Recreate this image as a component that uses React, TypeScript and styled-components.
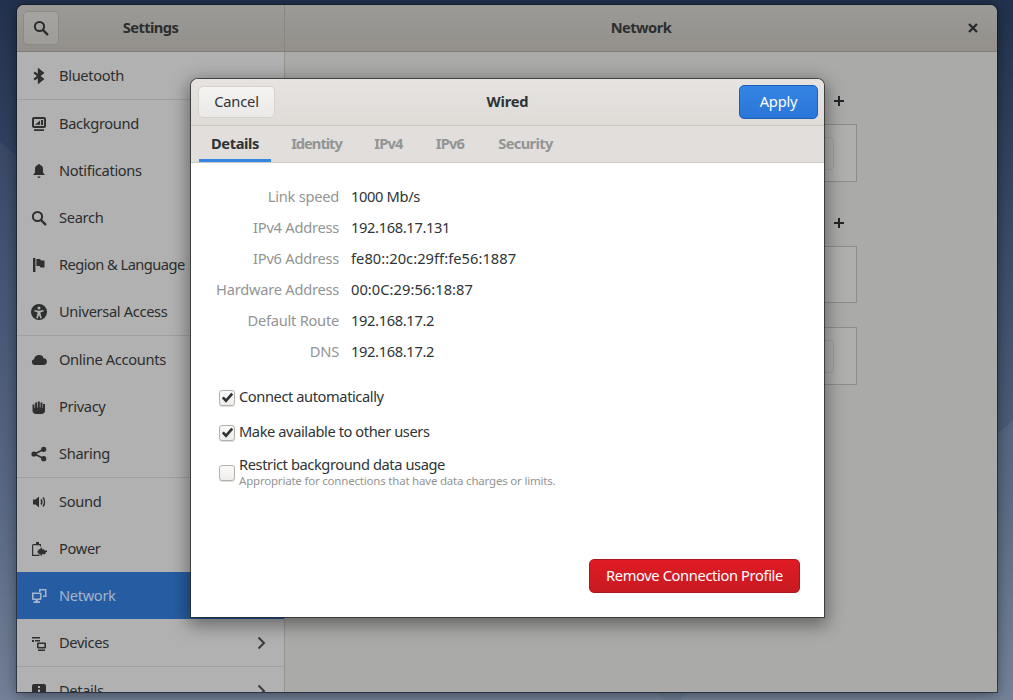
import React from 'react';
import styled, { createGlobalStyle } from 'styled-components';

const GlobalStyle = createGlobalStyle`
  html, body {
    margin: 0;
    height: 100%;
    overflow: hidden;
  }
  body {
    font-family: "Noto Sans", "Open Sans", sans-serif;
    font-size: 14.67px;
  }
`;

const Page = styled.div`
  position: relative;
  width: 1013px;
  height: 700px;
  box-sizing: border-box;
  padding: 5px 16px 8px 17px;
  background:
    linear-gradient(320deg, rgba(255, 255, 255, 0.06) 18%, transparent 18%),
    linear-gradient(40deg, rgba(255, 255, 255, 0.04) 36%, transparent 36%),
    linear-gradient(180deg, #22314d 0%, #3a4b6a 35%, #52627e 72%, #6c7a92 100%);
`;

const Window = styled.div`
  height: 100%;
  display: flex;
  flex-direction: column;
  overflow: hidden;
  border-radius: 7px 7px 0 0;
  background: #aaaaa8;
  box-shadow: 0 0 0 1px rgba(20, 25, 35, 0.6), 0 2px 14px rgba(0, 0, 0, 0.45);
`;

const TitleBar = styled.header`
  flex: none;
  height: 47px;
  box-sizing: border-box;
  display: flex;
  border-bottom: 1px solid #817e79;
  background: linear-gradient(180deg, #9c9a97, #93908b);
  color: #2d2e2f;
  font-weight: 700;
  letter-spacing: -0.55px;
`;

const TitleLeft = styled.div`
  position: relative;
  width: 267px;
  display: flex;
  align-items: center;
  justify-content: center;
  padding-bottom: 2px;
  box-sizing: border-box;
`;

const TitleRight = styled.div`
  position: relative;
  flex: 1;
  display: flex;
  align-items: center;
  justify-content: center;
  padding-bottom: 2px;
  border-left: 1px solid #8a8782;
`;

const SearchButton = styled.div`
  position: absolute;
  left: 7px;
  top: 7px;
  width: 34px;
  height: 32px;
  display: flex;
  align-items: center;
  justify-content: center;
  border-radius: 4px;
  background: linear-gradient(180deg, #a6a4a1, #9f9d99);
  box-shadow: 0 0 0 1px #8d8a85;
`;

const CloseButton = styled.div`
  position: absolute;
  right: 16px;
  top: 15px;
  width: 16px;
  height: 16px;
  display: flex;
  align-items: center;
  justify-content: center;
`;

const Body = styled.div`
  flex: 1;
  min-height: 0;
  display: flex;
`;

const Sidebar = styled.nav`
  flex: none;
  width: 267px;
  background: #b1b1b1;
  overflow: hidden;
`;

const SideRow = styled.div<{ $sep?: boolean; $active?: boolean }>`
  height: 47px;
  display: flex;
  align-items: center;
  gap: 12px;
  padding: 0 15px 0 14px;
  border-top: ${(p) => (p.$sep ? '1px solid #a0a0a0' : 'none')};
  background: ${(p) => (p.$active ? '#265da2' : 'transparent')};
  color: ${(p) => (p.$active ? '#a3b4cb' : '#2c2d2e')};
`;

const SideLabel = styled.span<{ $tight?: boolean }>`
  flex: 1;
  padding-bottom: 2px;
  letter-spacing: ${(p) => (p.$tight ? '-0.55px' : '-0.34px')};
  white-space: nowrap;
`;

const Main = styled.main`
  flex: 1;
  border-left: 1px solid #96948f;
  padding-top: 36px;
  display: flex;
  flex-direction: column;
  align-items: flex-end;
  padding-right: 140px;
`;

const HeadRow = styled.div<{ $top?: number }>`
  width: 430px;
  height: 36px;
  display: flex;
  align-items: flex-start;
  justify-content: flex-end;
  padding: 7px 12px 0 0;
  box-sizing: border-box;
  margin-top: ${(p) => p.$top ?? 0}px;
  color: #232425;
`;

const Frame = styled.div<{ $gap?: number; $height?: number }>`
  width: 430px;
  height: ${(p) => p.$height ?? 57}px;
  box-sizing: border-box;
  display: flex;
  align-items: center;
  justify-content: flex-end;
  padding-right: 22px;
  margin-bottom: ${(p) => p.$gap ?? 0}px;
  border: 1px solid #8f8d89;
  background: #afafae;
`;

const GhostButton = styled.div`
  width: 60px;
  height: 33px;
  box-sizing: border-box;
  border: 1px solid #a0a09e;
  border-radius: 4px;
`;

const Dialog = styled.section`
  position: absolute;
  left: 191px;
  top: 79px;
  width: 633px;
  height: 538px;
  display: flex;
  flex-direction: column;
  border-radius: 7px 7px 0 0;
  background: #ffffff;
  overflow: hidden;
  color: #2e3436;
`;

const DialogShadow = styled.div`
  position: absolute;
  left: 191px;
  top: 79px;
  width: 633px;
  height: 538px;
  border-radius: 7px 7px 0 0;
  box-shadow: 0 0 0 1px rgba(40, 40, 40, 0.75), 0 5px 18px 3px rgba(0, 0, 0, 0.42);
`;

const DialogHeader = styled.div`
  position: relative;
  flex: none;
  height: 47px;
  box-sizing: border-box;
  display: flex;
  align-items: center;
  justify-content: space-between;
  padding: 0 6px 0 7px;
  background: linear-gradient(180deg, #e6e3e0, #dfdcd8);
  border-bottom: 1px solid #c9c5bf;
`;

const DialogTitle = styled.div`
  position: absolute;
  left: 0;
  right: 0;
  padding-bottom: 2px;
  text-align: center;
  font-weight: 700;
  letter-spacing: -0.2px;
`;

const CancelButton = styled.div`
  position: relative;
  width: 77px;
  height: 32px;
  display: flex;
  align-items: center;
  justify-content: center;
  box-sizing: border-box;
  padding-bottom: 2px;
  border: 1px solid #d6d2cd;
  border-radius: 5px;
  background: linear-gradient(180deg, #f5f4f3, #ebe9e7);
  letter-spacing: -0.2px;
`;

const ApplyButton = styled.div`
  position: relative;
  width: 79px;
  height: 34px;
  display: flex;
  align-items: center;
  justify-content: center;
  box-sizing: border-box;
  padding-bottom: 2px;
  border: 1px solid #1b5fb8;
  border-radius: 5px;
  background: linear-gradient(180deg, #3584e4, #2a76d8);
  color: #ffffff;
  letter-spacing: -0.2px;
`;

const Tabs = styled.div`
  flex: none;
  height: 37px;
  box-sizing: border-box;
  display: flex;
  gap: 8px;
  padding-left: 8px;
  background: #e1dedb;
  border-bottom: 1px solid #cfccc6;
`;

const Tab = styled.div<{ $active?: boolean; $width: number; $spacing: number }>`
  width: ${(p) => p.$width}px;
  display: flex;
  align-items: center;
  justify-content: center;
  font-weight: 700;
  letter-spacing: ${(p) => p.$spacing}px;
  white-space: nowrap;
  color: ${(p) => (p.$active ? '#2e3436' : '#929595')};
  border-bottom: 3px solid ${(p) => (p.$active ? '#3584e4' : 'transparent')};
  box-sizing: border-box;
  padding-top: 1px;
`;

const DialogBody = styled.div`
  flex: 1;
  display: flex;
  flex-direction: column;
  padding: 23px 24px 24px 24px;
`;

const InfoGrid = styled.dl`
  margin: 0;
  display: grid;
  grid-template-columns: 124px 1fr;
  column-gap: 12px;
  row-gap: 10px;
  line-height: 21px;
`;

const InfoLabel = styled.dt`
  text-align: right;
  color: #929595;
  white-space: nowrap;
  letter-spacing: -0.25px;
`;

const InfoValue = styled.dd<{ $wide?: boolean }>`
  margin: 0;
  letter-spacing: ${(p) => (p.$wide ? '0.05px' : '-0.35px')};
`;

const Checks = styled.div`
  margin-top: 25px;
  padding-left: 4px;
  display: flex;
  flex-direction: column;
  gap: 14px;
`;

const CheckRow = styled.div<{ $multi?: boolean }>`
  display: flex;
  align-items: ${(p) => (p.$multi ? 'flex-start' : 'center')};
  gap: 4px;
  min-height: 21px;
`;

const CheckBox = styled.span<{ $offset?: number }>`
  flex: none;
  width: 16px;
  height: 16px;
  margin-top: ${(p) => p.$offset ?? 0}px;
  box-sizing: border-box;
  display: flex;
  align-items: center;
  justify-content: center;
  border: 1px solid #b6b0a8;
  border-radius: 3px;
  background: linear-gradient(180deg, #fafafa, #efedeb);
  box-shadow: 0 1px 0 rgba(0, 0, 0, 0.12);
`;

const CheckCopy = styled.div`
  margin-top: -2px;
`;

const CheckText = styled.div`
  letter-spacing: -0.42px;
  line-height: 18px;
  padding-bottom: 3px;
`;

const CheckHint = styled.div`
  margin-top: -2px;
  font-size: 11.5px;
  line-height: 14px;
  color: #929595;
  letter-spacing: -0.2px;
`;

const DangerRow = styled.div`
  margin-top: auto;
  display: flex;
  justify-content: flex-end;
`;

const RemoveButton = styled.div`
  width: 211px;
  height: 34px;
  box-sizing: border-box;
  display: flex;
  align-items: center;
  justify-content: center;
  padding-bottom: 2px;
  border: 1px solid #b0141c;
  border-radius: 5px;
  background: linear-gradient(180deg, #e01b24, #c71a22);
  color: #ffffff;
  letter-spacing: -0.36px;
  white-space: nowrap;
`;

type IconProps = { color?: string; size?: number };

const Svg: React.FC<React.PropsWithChildren<IconProps>> = ({ color = '#2e2f30', size = 16, children }) => (
  <svg width={size} height={size} viewBox="0 0 16 16" fill={color} stroke="none" style={{ flex: 'none' }}>
    {children}
  </svg>
);

const icons: Record<string, React.FC<IconProps>> = {
  bluetooth: (p) => (
    <Svg {...p}>
      <path d="M3.2 4.4 11.6 11 8 14V2l3.6 3L3.2 11.6" fill="none" stroke={p.color ?? '#2e2f30'} strokeWidth="2.3" />
    </Svg>
  ),
  background: (p) => (
    <Svg {...p}>
      <path d="M3 1h10a2 2 0 0 1 2 2v7a2 2 0 0 1-2 2H3a2 2 0 0 1-2-2V3a2 2 0 0 1 2-2zm0 2v7h10V3zm1 5.8 5-4.3v4.3zM10 4h2v5h-2zM3 13.2h10V15H3z" fillRule="evenodd" />
    </Svg>
  ),
  bell: (p) => (
    <Svg {...p}>
      <path d="M8 1a1 1 0 0 1 1 1c2.2.4 3 2 3 4v3.5l2 2.5H2l2-2.5V6c0-2 .8-3.6 3-4a1 1 0 0 1 1-1zM6.5 13.5h3a1.5 1.5 0 0 1-3 0z" />
    </Svg>
  ),
  search: (p) => (
    <Svg {...p}>
      <circle cx="6.5" cy="6.5" r="4.6" fill="none" stroke={p.color ?? '#2e2f30'} strokeWidth="2" />
      <path d="M10 10l4.3 4.3" stroke={p.color ?? '#2e2f30'} strokeWidth="2.4" strokeLinecap="round" />
    </Svg>
  ),
  flag: (p) => (
    <Svg {...p}>
      <path d="M2 1h2.4v14H2zM5.4 2H9l1 1.4h3.5v7H9.5L8.5 9H5.4z" />
    </Svg>
  ),
  access: (p) => (
    <Svg {...p}>
      <path d="M8 0a8 8 0 1 1 0 16A8 8 0 0 1 8 0zm0 2.6a1.5 1.5 0 1 0 0 3 1.5 1.5 0 0 0 0-3zM3.4 6v1.4l3 .8v1.6L5.2 14l1.4.4L8 11l1.4 3.4 1.4-.4-1.2-4.2V8.2l3-.8V6L8 6.8z" fillRule="evenodd" />
    </Svg>
  ),
  cloud: (p) => (
    <Svg {...p}>
      <path d="M8.5 3a4 4 0 0 1 3.9 3.2A3.4 3.4 0 0 1 12.5 13h-9A2.9 2.9 0 0 1 3 7.3 5 5 0 0 1 8.5 3z" />
    </Svg>
  ),
  hand: (p) => (
    <Svg {...p}>
      <path d="M1.5 5.5h2V9h.6V3.5h2V8.5h.7V2.5h2V8.5h.7V3.5h2V9h.5V5h2v6.5C14 13.5 12.5 15 10.5 15H5c-2 0-3.5-1.5-3.5-3.5z" />
    </Svg>
  ),
  share: (p) => (
    <Svg {...p}>
      <path d="M12.5 3.5 3.5 8l9 4.5" fill="none" stroke={p.color ?? '#2e2f30'} strokeWidth="1.6" />
      <circle cx="12.7" cy="3.3" r="2.6" />
      <circle cx="3" cy="8" r="2.6" />
      <circle cx="12.7" cy="12.7" r="2.6" />
    </Svg>
  ),
  sound: (p) => (
    <Svg {...p}>
      <path d="M2 5.5H4.5L8 2.5v11l-3.5-3H2z" />
      <path d="M10 5.5c1 1.4 1 3.6 0 5M12 3.5c2 2.6 2 6.4 0 9" fill="none" stroke={p.color ?? '#2e2f30'} strokeWidth="1.5" />
    </Svg>
  ),
  power: (p) => (
    <Svg {...p}>
      <path d="M3 3h2V1h3v2h2v2.5H8.8V4.3H2.2v9.4h6.3V15H1V4.3C1 3.6 2 3 3 3z" />
      <path d="M7.5 8.2h2V6.8h1.5v1.4h1c1 0 1.6.6 1.7 1.3H16v1.4h-1.3v1c-.1.7-.7 1.3-1.7 1.3h-2v1.4H9.5v-1.4h-2v-1.5H6.5V9.7h1z" />
    </Svg>
  ),
  network: (p) => (
    <Svg {...p}>
      <path d="M8 1h7.5v8H12V7.5h2V2.5H9.5V4H8z" />
      <path d="M1 4.5h9.5V11a1 1 0 0 1-1 1H7v1.2h2v1.8H2.5v-1.8h2V12H2a1 1 0 0 1-1-1zM2.6 6v4.4h6.3V6z" fillRule="evenodd" />
    </Svg>
  ),
  devices: (p) => (
    <Svg {...p}>
      <path d="M1 2h8v1.5H1zM1 5h2v2H1zM4 5h5v1.5H4z" />
      <path d="M7 7.5h7a1 1 0 0 1 1 1v4a1 1 0 0 1-1 1H7a1 1 0 0 1-1-1v-4a1 1 0 0 1 1-1zm.6 1.5v3h5.8V9zM7 14.5h7V16H7z" fillRule="evenodd" />
    </Svg>
  ),
  details: (p) => (
    <Svg {...p}>
      <path d="M3 1h10a2 2 0 0 1 2 2v10a2 2 0 0 1-2 2H3a2 2 0 0 1-2-2V3a2 2 0 0 1 2-2zm4 2v2h2V3zm0 3.5V13h2V6.5z" fillRule="evenodd" />
    </Svg>
  ),
};

const Chevron: React.FC = () => (
  <svg width="16" height="16" viewBox="0 0 16 16" style={{ flex: 'none' }}>
    <path d="M5.5 2.5 11 8l-5.5 5.5" fill="none" stroke="#3a3b3c" strokeWidth="2" />
  </svg>
);

const PlusIcon: React.FC = () => (
  <svg width="12" height="12" viewBox="0 0 12 12">
    <path d="M6 1v10M1 6h10" stroke="#232425" strokeWidth="2" />
  </svg>
);

const CheckMark: React.FC = () => (
  <svg width="13" height="13" viewBox="0 0 13 13">
    <path d="M1.8 6.4 5 9.8 11.2 2.6" fill="none" stroke="#2e3436" strokeWidth="2.7" />
  </svg>
);

const sidebarItems = [
  { label: 'Bluetooth', icon: 'bluetooth' },
  { label: 'Background', icon: 'background', sep: true },
  { label: 'Notifications', icon: 'bell' },
  { label: 'Search', icon: 'search' },
  { label: 'Region & Language', icon: 'flag', tight: true },
  { label: 'Universal Access', icon: 'access' },
  { label: 'Online Accounts', icon: 'cloud', sep: true },
  { label: 'Privacy', icon: 'hand' },
  { label: 'Sharing', icon: 'share' },
  { label: 'Sound', icon: 'sound', sep: true },
  { label: 'Power', icon: 'power' },
  { label: 'Network', icon: 'network', active: true },
  { label: 'Devices', icon: 'devices', arrow: true },
  { label: 'Details', icon: 'details', sep: true, arrow: true },
];

const infoRows = [
  { label: 'Link speed', value: '1000 Mb/s' },
  { label: 'IPv4 Address', value: '192.168.17.131' },
  { label: 'IPv6 Address', value: 'fe80::20c:29ff:fe56:1887', wide: true },
  { label: 'Hardware Address', value: '00:0C:29:56:18:87', wide: true },
  { label: 'Default Route', value: '192.168.17.2' },
  { label: 'DNS', value: '192.168.17.2' },
];

const tabs = [
  { label: 'Details', width: 72, spacing: -0.4 },
  { label: 'Identity', width: 75, spacing: -1 },
  { label: 'IPv4', width: 53, spacing: -0.8 },
  { label: 'IPv6', width: 54, spacing: -0.8 },
  { label: 'Security', width: 81, spacing: -0.65 },
];

const App: React.FC = () => (
  <>
    <GlobalStyle />
    <Page>
      <Window>
        <TitleBar>
          <TitleLeft>
            <SearchButton>
              <icons.search color="#2b2c2d" />
            </SearchButton>
            Settings
          </TitleLeft>
          <TitleRight>
            Network
            <CloseButton>
              <svg width="10" height="10" viewBox="0 0 10 10">
                <path d="M1 1l8 8M9 1 1 9" stroke="#262728" strokeWidth="2.2" />
              </svg>
            </CloseButton>
          </TitleRight>
        </TitleBar>
        <Body>
          <Sidebar>
            {sidebarItems.map((item) => {
              const Icon = icons[item.icon];
              return (
                <SideRow key={item.label} $sep={item.sep} $active={item.active}>
                  <Icon color={item.active ? '#a3b4cb' : '#2e2f30'} />
                  <SideLabel $tight={item.tight}>{item.label}</SideLabel>
                  {item.arrow && <Chevron />}
                </SideRow>
              );
            })}
          </Sidebar>
          <Main>
            <HeadRow>
              <PlusIcon />
            </HeadRow>
            <Frame $height={58}>
              <GhostButton />
            </Frame>
            <HeadRow $top={28}>
              <PlusIcon />
            </HeadRow>
            <Frame $gap={24} />
            <Frame $height={58}>
              <GhostButton />
            </Frame>
          </Main>
        </Body>
      </Window>

      <DialogShadow />
      <Dialog>
        <DialogHeader>
          <DialogTitle>Wired</DialogTitle>
          <CancelButton>Cancel</CancelButton>
          <ApplyButton>Apply</ApplyButton>
        </DialogHeader>
        <Tabs>
          {tabs.map((tab, i) => (
            <Tab key={tab.label} $active={i === 0} $width={tab.width} $spacing={tab.spacing}>
              {tab.label}
            </Tab>
          ))}
        </Tabs>
        <DialogBody>
          <InfoGrid>
            {infoRows.map((row) => (
              <React.Fragment key={row.label}>
                <InfoLabel>{row.label}</InfoLabel>
                <InfoValue $wide={row.wide}>{row.value}</InfoValue>
              </React.Fragment>
            ))}
          </InfoGrid>
          <Checks>
            <CheckRow>
              <CheckBox>
                <CheckMark />
              </CheckBox>
              <CheckText>Connect automatically</CheckText>
            </CheckRow>
            <CheckRow>
              <CheckBox>
                <CheckMark />
              </CheckBox>
              <CheckText>Make available to other users</CheckText>
            </CheckRow>
            <CheckRow $multi>
              <CheckBox $offset={8} />
              <CheckCopy>
                <CheckText>Restrict background data usage</CheckText>
                <CheckHint>Appropriate for connections that have data charges or limits.</CheckHint>
              </CheckCopy>
            </CheckRow>
          </Checks>
          <DangerRow>
            <RemoveButton>Remove Connection Profile</RemoveButton>
          </DangerRow>
        </DialogBody>
      </Dialog>
    </Page>
  </>
);

export default App;
